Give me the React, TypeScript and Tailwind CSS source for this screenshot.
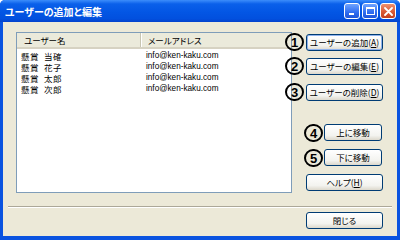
import type { ReactNode } from "react";
import clsx from "clsx";

const jp = "[font-family:'Noto_Sans_CJK_JP',sans-serif] [font-feature-settings:'palt']";

const users = [
  { last: "懸賞", first: "当確", email: "info@ken-kaku.com" },
  { last: "懸賞", first: "花子", email: "info@ken-kaku.com" },
  { last: "懸賞", first: "太郎", email: "info@ken-kaku.com" },
  { last: "懸賞", first: "次郎", email: "info@ken-kaku.com" },
];

function Btn({
  children,
  className,
  focus,
}: {
  children: ReactNode;
  className?: string;
  focus?: boolean;
}) {
  return (
    <button
      className={clsx(
        "h-[17px] rounded-[3px] border border-[#003C74] bg-[linear-gradient(to_bottom,#FFFFFF,#F3F3EF_70%,#DCD8CC)] text-[8.5px] leading-none text-black flex items-center justify-center",
        jp,
        focus && "shadow-[inset_0_0_0_1px_#8FB2EC]",
        className
      )}
    >
      {children}
    </button>
  );
}

function Mark({ n, className }: { n: number; className: string }) {
  return (
    <div
      className={clsx(
        "absolute w-[19px] h-[18px] rounded-full border-[2px] border-black flex items-center justify-center text-[13px] font-bold leading-none text-black [font-family:'Liberation_Sans',sans-serif]",
        className
      )}
    >
      {n}
    </div>
  );
}

export default function App() {
  return (
    <div className="w-[400px] h-[240px] relative flex flex-col bg-[#0A53E0] rounded-t-[5px] overflow-hidden">
      {/* Title bar */}
      <div className="h-[22px] flex items-center bg-[linear-gradient(to_bottom,#3C8DFB_0%,#0A60EA_18%,#0356E4_55%,#0250DE_85%,#0442CC_100%)]">
        <span className={clsx("pl-[5px] text-[10px] font-bold text-white flex-1", jp)}>
          ユーザーの追加と編集
        </span>
        <div className="flex gap-[2px] pr-[4px]">
          <div className="w-[16px] h-[16px] rounded-[3px] border border-white bg-[linear-gradient(to_bottom,#6FA4FF,#2F6DF0_60%,#1F55D8)] relative">
            <div className="absolute left-[4px] bottom-[3px] w-[5px] h-[2px] bg-white" />
          </div>
          <div className="w-[16px] h-[16px] rounded-[3px] border border-white bg-[linear-gradient(to_bottom,#6FA4FF,#2F6DF0_60%,#1F55D8)] flex items-center justify-center">
            <div className="w-[9px] h-[8px] border border-white border-t-[2px]" />
          </div>
          <div className="w-[16px] h-[16px] rounded-[3px] border border-white bg-[linear-gradient(to_bottom,#F0916E,#DA5A35_55%,#C23F1E)] flex items-center justify-center">
            <svg width="9" height="9" viewBox="0 0 9 9">
              <path d="M1 1 L8 8 M8 1 L1 8" stroke="white" strokeWidth="1.8" strokeLinecap="round" />
            </svg>
          </div>
        </div>
      </div>

      {/* Client area */}
      <div className="flex-1 mx-[3px] mb-[4px] bg-[#ECE9D8] flex flex-col">
        <div className="flex pl-[13px] pt-[10px]">
          {/* List */}
          <div className="w-[276px] h-[161px] border border-[#7F9DB9] bg-white flex flex-col">
            <div className={clsx("h-[16px] flex bg-[#EBEADB] border-b-[2px] border-[#D6D2C2] text-[8.5px] leading-none text-black", jp)}>
              <div className="w-[124px] pl-[7px] flex items-center border-r border-[#C7C5B2]">ユーザー名</div>
              <div className="flex-1 pl-[6px] flex items-center border-l border-white">メールアドレス</div>
            </div>
            <div className="pt-[1px]">
              {users.map((u) => (
                <div key={u.first} className="h-[11px] flex items-center overflow-hidden">
                  <div className={clsx("w-[125px] pl-[4px] flex gap-[5px] text-[8.5px] tracking-[0.5px] leading-[10px] text-black", jp)}>
                    <span>{u.last}</span>
                    <span>{u.first}</span>
                  </div>
                  <div className="pl-[4px] text-[8.2px] leading-[10px] text-black [font-family:'Liberation_Sans',sans-serif]">
                    {u.email}
                  </div>
                </div>
              ))}
            </div>
          </div>

          {/* Buttons */}
          <div className="ml-[14px] w-[77px] flex flex-col">
            <Btn focus className="mt-[2px]">
              ユーザーの追加(<u>A</u>)
            </Btn>
            <Btn className="mt-[7px]">
              ユーザーの編集(<u>E</u>)
            </Btn>
            <Btn className="mt-[9px]">
              ユーザーの削除(<u>D</u>)
            </Btn>
            <Btn className="mt-[23px] ml-[18px] w-[58px]">上に移動</Btn>
            <Btn className="mt-[8px] ml-[18px] w-[58px]">下に移動</Btn>
            <Btn className="mt-[8px]">
              ヘルプ(<u>H</u>)
            </Btn>
          </div>
        </div>

        <div className="mt-[13px] mx-[5px] border-t border-[#ACA899] border-b border-b-white" />

        <div className="flex justify-end pr-[14px] mt-[4px]">
          <Btn className="w-[77px]">閉じる</Btn>
        </div>
      </div>

      <Mark n={1} className="left-[285px] top-[33px]" />
      <Mark n={2} className="left-[285px] top-[57px]" />
      <Mark n={3} className="left-[285px] top-[83px]" />
      <Mark n={4} className="left-[304px] top-[124px]" />
      <Mark n={5} className="left-[304px] top-[149px]" />
    </div>
  );
}
